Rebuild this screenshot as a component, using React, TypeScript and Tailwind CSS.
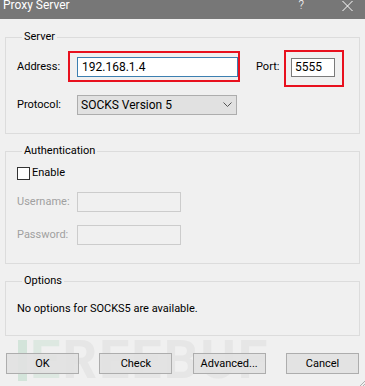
import type { ReactNode } from "react"

const font = { fontFamily: '"Segoe UI", Roboto, "Liberation Sans", sans-serif' }

function Group({ title, children, className = "" }: { title: string; children: ReactNode; className?: string }) {
  return (
    <fieldset className={`border border-[#dcdcdc] px-[11px] ${className}`}>
      <legend className="ml-[5px] px-[2px] text-[11px] leading-[16px] text-black">{title}</legend>
      {children}
    </fieldset>
  )
}

function Button({ children }: { children: ReactNode }) {
  return (
    <button className="w-[73px] h-[21px] border border-[#adadad] bg-[#e1e1e1]/90 text-[11px] leading-[19px] text-black">
      {children}
    </button>
  )
}

export default function App() {
  return (
    <div className="relative w-[365px] h-[386px] overflow-hidden bg-[#f0f0f0] text-[11px] text-black" style={font}>
      {/* title bar */}
      <div className="flex h-[19px] items-start bg-[#777777] text-white">
        <span className="ml-[3px] text-[12px] leading-[11px]">Proxy Server</span>
        <span className="ml-auto text-[12px] leading-[11px] font-light">?</span>
        <svg className="ml-[38px] mr-[12px] mt-[1px]" width="11" height="10" viewBox="0 0 11 10">
          <path d="M0.5 0 L10.5 10 M10.5 0 L0.5 10" stroke="white" strokeWidth="1" />
        </svg>
      </div>

      <div className="px-[5px] pt-[10px]">
        <Group title="Server" className="pb-[18px]">
          <div className="mt-[12px] flex h-[20px] items-center">
            <span className="w-[60px]">Address:</span>
            <div className="relative">
              <span className="absolute -left-[9px] -right-[2px] -top-[6px] -bottom-[5px] border-2 border-[#e8101e]" />
              <div className="w-[161px] h-[20px] border border-[#3c7fb1] bg-white pl-[4px] text-[12px] leading-[18px]">
                192.168.1.4
              </div>
            </div>
            <span className="ml-[18px] w-[35px]">Port:</span>
            <div className="relative">
              <span className="absolute -left-[7px] -right-[9px] -top-[8px] -bottom-[10px] border-2 border-[#e8101e]" />
              <div className="w-[44px] h-[19px] border border-[#7a7a7a] bg-white pl-[3px] text-[12px] leading-[17px]">5555</div>
            </div>
          </div>
          <div className="mt-[18px] flex h-[20px] items-center">
            <span className="w-[60px]">Protocol:</span>
            <div className="flex w-[160px] h-[20px] items-center border border-[#adadad] bg-[#e1e1e1] pl-[3px] pr-[4px]">
              <span className="text-[12px]">SOCKS Version 5</span>
              <svg className="ml-auto" width="9" height="6" viewBox="0 0 9 6">
                <path d="M0.5 0.5 L4.5 4.5 L8.5 0.5" fill="none" stroke="#555" strokeWidth="1" />
              </svg>
            </div>
          </div>
        </Group>

        <Group title="Authentication" className="mt-[9px] pb-[18px]">
          <div className="mt-[8px] flex h-[13px] items-center">
            <span className="w-[13px] h-[13px] border border-[#333333] bg-white" />
            <span className="ml-[2px]">Enable</span>
          </div>
          <div className="mt-[12px] flex h-[20px] items-center text-[#a0a0a0]">
            <span className="w-[60px]">Username:</span>
            <div className="w-[104px] h-[20px] border border-[#cccccc] bg-[#f0f0f0]" />
          </div>
          <div className="mt-[13px] flex h-[20px] items-center text-[#a0a0a0]">
            <span className="w-[60px]">Password:</span>
            <div className="w-[104px] h-[20px] border border-[#cccccc] bg-[#f0f0f0]" />
          </div>
        </Group>

        <Group title="Options" className="mt-[9px] pb-[18px]">
          <p className="mt-[12px] leading-[16px]">No options for SOCKS5 are available.</p>
        </Group>
      </div>

      {/* watermark */}
      <div className="pointer-events-none absolute left-[18px] top-[335px] flex items-center text-[54px] font-bold leading-[50px] tracking-[2px] text-[#e6e6e6]">
        <span className="mr-[3px] w-[9px] h-[41px] bg-[#d3e4da]" />
        <span className="text-[#dde8e1]">E</span>
        <span>REEBUF</span>
      </div>

      <div className="relative mt-[17px] flex justify-between px-[6px]">
        <Button>OK</Button>
        <Button>Check</Button>
        <Button>Advanced...</Button>
        <Button>Cancel</Button>
      </div>

      {/* resize grip */}
      <svg className="absolute right-0 bottom-0" width="6" height="6" viewBox="0 0 6 6">
        <path d="M6 1 L1 6 M6 4 L4 6" stroke="#b0b0b0" strokeWidth="1" />
      </svg>
    </div>
  )
}
